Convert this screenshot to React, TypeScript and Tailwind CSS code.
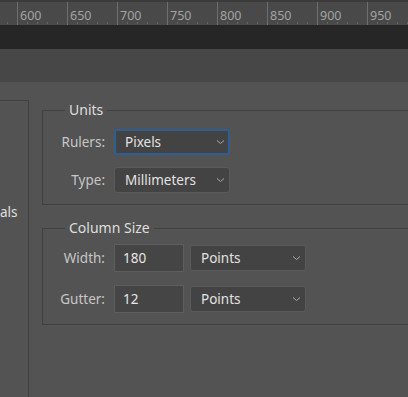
const font = { fontFamily: '"Noto Sans", "Open Sans", Arial, sans-serif' };

const Chevron = () => (
  <svg width="9" height="6" viewBox="0 0 9 6" className="shrink-0">
    <path d="M1 1.5 L4.5 4.5 L8 1.5" fill="none" stroke="#a9a9a9" strokeWidth="1" />
  </svg>
);

const Ruler = () => {
  const labels = [600, 650, 700, 750, 800, 850, 900, 950];
  const minor: number[] = [];
  for (let x = 7; x < 408; x += 10) {
    if ((x - 17) % 50 !== 0) minor.push(x);
  }
  return (
    <svg width="408" height="25" className="block shrink-0">
      <rect x="0" y="0" width="408" height="25" fill="#494949" />
      <rect x="0" y="0" width="408" height="2" fill="#3b3b3b" />
      {labels.map((l, i) => {
        const x = 17 + i * 50;
        return (
          <g key={l}>
            <line x1={x + 0.5} y1="2" x2={x + 0.5} y2="25" stroke="#6e6e6e" strokeWidth="1" />
            <text x={x + 3} y="20" fill="#a3a3a3" fontSize="12.5" fontFamily='"Noto Sans", Arial, sans-serif'>
              {l}
            </text>
          </g>
        );
      })}
      {minor.map((x) => (
        <line key={x} x1={x + 0.5} y1="22" x2={x + 0.5} y2="24" stroke="#666666" strokeWidth="1" />
      ))}
    </svg>
  );
};

const Select = ({ value, focused }: { value: string; focused?: boolean }) => (
  <div
    className={`w-[116px] h-[26px] flex items-center justify-between rounded-[3px] bg-[#434343] text-[13.5px] text-[#e2e2e2] ${
      focused ? 'border-2 border-[#2f5e93] pl-[9px] pr-[3px]' : 'border border-[#5a5a5a] pl-[10px] pr-[4px]'
    }`}
  >
    <span>{value}</span>
    <Chevron />
  </div>
);

const Field = ({ value }: { value: string }) => (
  <div className="w-[70px] h-[28px] flex items-center pl-[8px] bg-[#454545] border border-[#5e5e5e] text-[13.5px] text-[#e6e6e6]">
    {value}
  </div>
);

const Label = ({ children }: { children: string }) => (
  <span className="w-[62px] text-right text-[13.5px] text-[#c6c6c6]">{children}</span>
);

export default function App() {
  return (
    <div className="w-[408px] h-[397px] flex flex-col bg-[#535353] overflow-hidden" style={font}>
      <Ruler />
      <div className="h-[24px] bg-[#262626] shrink-0" />
      <div className="h-[33px] bg-[#474747] shrink-0" />

      <div className="flex flex-1 min-h-0">
        <div className="w-[29px] shrink-0 mt-[18px] border-t border-r border-[#404040] overflow-hidden">
          <div className="mt-[101px] text-[13.5px] text-[#e0e0e0] whitespace-nowrap leading-[20px]">als</div>
        </div>

        <div className="flex-1 min-w-0 overflow-hidden pl-[13px] pt-[18px]">
          <fieldset className="w-[420px] border border-r-0 border-[#404040] m-0 p-0 pb-[11px]">
            <legend className="ml-[22px] px-[4px] text-[14px] leading-[20px] text-[#dedede]">Units</legend>
            <div className="flex flex-col gap-[12px] mt-[9px]">
              <div className="flex items-center gap-[9px]">
                <Label>Rulers:</Label>
                <Select value="Pixels" focused />
              </div>
              <div className="flex items-center gap-[9px]">
                <Label>Type:</Label>
                <Select value="Millimeters" />
              </div>
            </div>
          </fieldset>

          <fieldset className="w-[420px] border border-r-0 border-[#404040] mt-[13px] m-0 p-0 pb-[11px]">
            <legend className="ml-[22px] px-[4px] text-[14px] leading-[20px] text-[#dedede]">Column Size</legend>
            <div className="flex flex-col gap-[13px] mt-[6px]">
              <div className="flex items-center gap-[9px]">
                <Label>Width:</Label>
                <div className="flex items-center gap-[6px]">
                  <Field value="180" />
                  <Select value="Points" />
                </div>
              </div>
              <div className="flex items-center gap-[9px]">
                <Label>Gutter:</Label>
                <div className="flex items-center gap-[6px]">
                  <Field value="12" />
                  <Select value="Points" />
                </div>
              </div>
            </div>
          </fieldset>
        </div>
      </div>
    </div>
  );
}
